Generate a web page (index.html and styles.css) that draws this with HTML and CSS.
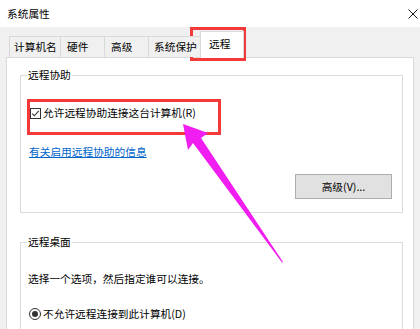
FILE: index.html
```html
<!DOCTYPE html>
<html lang="zh-CN">
<head>
<meta charset="utf-8">
<title>系统属性</title>
<link rel="stylesheet" href="styles.css">
</head>
<body>
<div class="window">
  <div class="titlebar">
    <span class="title">系统属性</span>
    <svg class="close" width="10" height="10" viewBox="0 0 10 10"><path d="M0.5 0.5L9.5 9.5M9.5 0.5L0.5 9.5" stroke="#1a1a1a" stroke-width="1"/></svg>
  </div>
  <div class="dialog">
    <div class="tabs">
      <div class="tab t1">计算机名</div>
      <div class="tab t2">硬件</div>
      <div class="tab t3">高级</div>
      <div class="tab t4">系统保护</div>
      <div class="tab active">远程</div>
    </div>
    <div class="panel">
      <fieldset class="group g1">
        <legend>远程协助</legend>
        <div class="check-row">
          <svg class="checkbox" width="11" height="11" viewBox="0 0 11 11"><rect x="0.5" y="0.5" width="10" height="10" fill="#fff" stroke="#333"/><path d="M2.2 5.6L4.3 7.8L8.8 2.8" fill="none" stroke="#333" stroke-width="1.1"/></svg>
          <span>允许远程协助连接这台计算机(R)</span>
        </div>
        <a class="link" href="#">有关启用远程协助的信息</a>
        <div class="btn-row"><button class="btn">高级(V)...</button></div>
      </fieldset>
      <fieldset class="group g2">
        <legend>远程桌面</legend>
        <p class="desc">选择一个选项，然后指定谁可以连接。</p>
        <div class="radio-row">
          <svg class="radio" width="12" height="12" viewBox="0 0 12 12"><circle cx="6" cy="6" r="5.5" fill="#fff" stroke="#333"/><circle cx="6" cy="6" r="3" fill="#333"/></svg>
          <span>不允许远程连接到此计算机(D)</span>
        </div>
      </fieldset>
    </div>
  </div>
  <div class="hl hl-tab"></div>
  <div class="hl hl-check"></div>
  <svg class="arrow" width="420" height="329" viewBox="0 0 420 329"><polygon points="183,124 208,133 201,138 283,262 282,262.5 193,143 188,150" fill="#f01ef0"/></svg>
</div>
</body>
</html>
```

FILE: styles.css
```css
* { box-sizing: border-box; }
html, body { margin: 0; padding: 0; }
body {
  font-family: "Noto Sans CJK SC", "Noto Sans", sans-serif;
  font-size: 10.7px;
  color: #000;
  background: #fff;
}
.window {
  position: relative;
  width: 420px;
  height: 329px;
  overflow: hidden;
  background: #fff;
}
.titlebar {
  height: 27px;
  display: flex;
  align-items: center;
  justify-content: space-between;
  padding: 0 2px 0 7px;
  background: #fff;
}
.title { line-height: 16px; }
.close { display: block; }
.dialog {
  background: #f0f0f0;
  height: 302px;
  padding: 4px 6px 0 6px;
  display: flex;
  flex-direction: column;
}
.tabs {
  display: flex;
  align-items: flex-end;
  height: 26px;
  padding-left: 3px;
  position: relative;
  z-index: 1;
}
.tab {
  height: 21px;
  border: 1px solid #d9d9d9;
  border-bottom: none;
  background: #f0f0f0;
  display: flex;
  align-items: center;
  padding-left: 6px;
  margin-left: -1px;
  white-space: nowrap;
  overflow: hidden;
  line-height: 16px;
}
.t1 { width: 52px; margin-left: 0; padding-left: 4px; }
.t2 { width: 45px; }
.t3 { width: 45px; }
.t4 { width: 55px; padding-left: 5px; }
.tab.active {
  width: 44px;
  height: 27px;
  margin-left: -3px;
  margin-bottom: -1px;
  background: #fff;
  padding-left: 8px;
  padding-bottom: 3px;
  position: relative;
  z-index: 2;
}
.panel {
  flex: 1;
  background: #fff;
  border: 1px solid #d9d9d9;
  padding: 9px 10px 0 13px;
}
.group {
  margin: 0;
  border: 1px solid #dcdcdc;
  padding: 0 10px 13px 9px;
  min-width: 0;
}
.group legend {
  margin-left: -3px;
  padding: 0 1px;
  line-height: 16px;
}
.check-row, .radio-row {
  display: flex;
  align-items: center;
  height: 16px;
  line-height: 16px;
}
.check-row { margin-top: 22px; }
.checkbox { margin-right: 2px; display: block; }
.radio { margin-left: -1px; margin-right: 2px; display: block; }
.link {
  display: block;
  margin-top: 23px;
  margin-left: -1px;
  line-height: 16px;
  color: #0066cc;
  text-decoration: underline;
  width: max-content;
}
.btn-row {
  display: flex;
  justify-content: flex-end;
  margin-top: 14px;
}
.btn {
  width: 97px;
  height: 25px;
  background: #e1e1e1;
  border: 1px solid #adadad;
  font: inherit;
  color: #000;
  padding: 0;
  border-radius: 0;
}
.g2 { margin-top: 21px; }
.desc {
  margin: 21px 0 0 -2px;
  line-height: 16px;
}
.radio-row { margin-top: 19px; }
.hl {
  position: absolute;
  border: 3px solid #f23a3a;
  pointer-events: none;
}
.hl-tab { left: 190px; top: 27px; width: 56px; height: 34px; }
.hl-check { left: 27px; top: 99px; width: 194px; height: 36px; }
.arrow {
  position: absolute;
  left: 0;
  top: 0;
  pointer-events: none;
}
```
